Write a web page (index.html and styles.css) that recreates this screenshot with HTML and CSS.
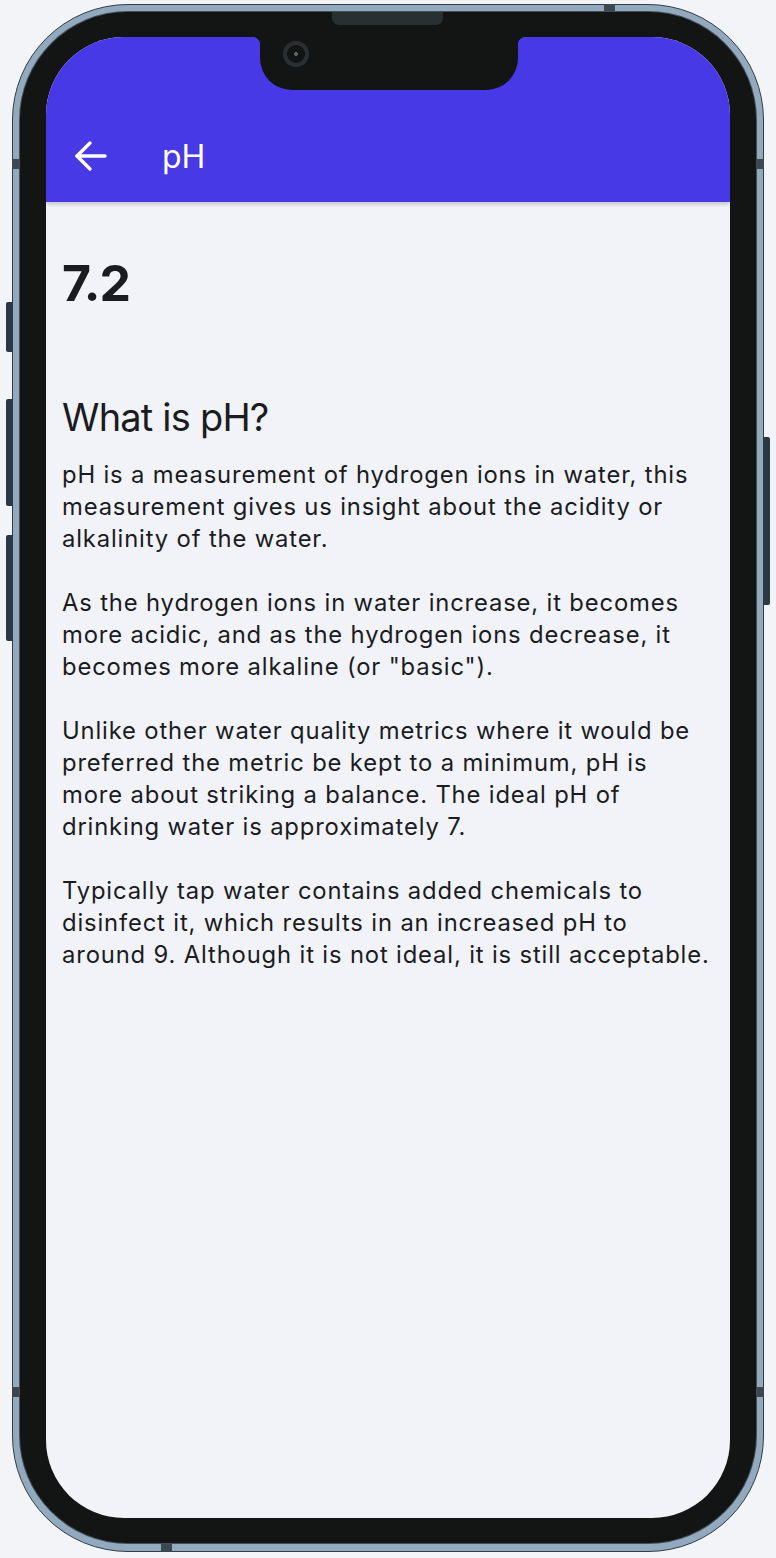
FILE: index.html
```html
<!DOCTYPE html>
<html lang="en">
<head>
<meta charset="utf-8">
<title>pH</title>
<link rel="stylesheet" href="styles.css">
</head>
<body>
<div class="phone">
  <span class="btn btn-l1"></span>
  <span class="btn btn-l2"></span>
  <span class="btn btn-l3"></span>
  <span class="btn btn-r1"></span>
  <span class="mark mark-top"></span>
  <span class="mark mark-bottom"></span>
  <span class="mark mark-l-top"></span>
  <span class="mark mark-r-top"></span>
  <span class="mark mark-l-bot"></span>
  <span class="mark mark-r-bot"></span>
  <div class="bezel">
    <span class="speaker"></span>
    <div class="screen">
      <div class="notch"><span class="camera"></span></div>
      <header class="appbar">
        <div class="toolbar">
          <button class="back" aria-label="Back">
            <svg width="34" height="34" viewBox="0 0 34 34" fill="none" stroke="#ffffff" stroke-width="3.4" stroke-linecap="round" stroke-linejoin="round">
              <path d="M31 16H3"/>
              <path d="M16 3L3 16L16 29"/>
            </svg>
          </button>
          <h1 class="title">pH</h1>
        </div>
      </header>
      <main class="content">
        <div class="value">7.2</div>
        <h2 class="heading">What is pH?</h2>
        <p class="para">pH is a measurement of hydrogen ions in water, this measurement gives us insight about the acidity or alkalinity of the water.</p>
        <p class="para">As the hydrogen ions in water increase, it becomes more acidic, and as the hydrogen ions decrease, it becomes more alkaline (or "basic").</p>
        <p class="para">Unlike other water quality metrics where it would be preferred the metric be kept to a minimum, pH is more about striking a balance. The ideal pH of drinking water is approximately 7.</p>
        <p class="para">Typically tap water contains added chemicals to disinfect it, which results in an increased pH to around 9. Although it is not ideal, it is still acceptable.</p>
      </main>
    </div>
  </div>
</div>
</body>
</html>
```
FILE: styles.css
```css
* { box-sizing: border-box; }
html, body { margin: 0; padding: 0; }
body {
  background: #f2f4f8;
  width: 776px;
  height: 1558px;
  overflow: hidden;
  font-family: "Inter", "Liberation Sans", sans-serif;
  padding: 4px 12px 0 12px;
}
.phone {
  position: relative;
  width: 752px;
  height: 1548px;
  border-radius: 116px;
  background: #93a9bd;
  border: 1px solid #2e3d48;
  padding: 7px 7px 8px 7px;
}
.btn {
  position: absolute;
  background: #293a45;
  border-radius: 2px 0 0 2px;
  width: 7px;
}
.btn-l1 { left: -7px; top: 297px; height: 50px; }
.btn-l2 { left: -7px; top: 394px; height: 107px; }
.btn-l3 { left: -7px; top: 530px; height: 106px; }
.btn-r1 { right: -7px; top: 432px; height: 168px; border-radius: 0 2px 2px 0; }
.mark { position: absolute; background: #3b4852; }
.mark-top { top: -1px; left: 591px; width: 11px; height: 9px; }
.mark-bottom { bottom: -1px; left: 148px; width: 11px; height: 9px; }
.mark-l-top { left: -1px; top: 154px; width: 9px; height: 10px; }
.mark-r-top { right: -1px; top: 154px; width: 9px; height: 10px; }
.mark-l-bot { left: -1px; top: 1382px; width: 9px; height: 10px; }
.mark-r-bot { right: -1px; top: 1382px; width: 9px; height: 10px; }
.bezel {
  position: relative;
  width: 100%;
  height: 100%;
  background: #131514;
  border-radius: 108px;
  padding: 25px 26px 25px 26px;
  box-shadow: 0 0 0 1px #41505a;
}
.speaker {
  position: absolute;
  top: 0;
  left: 312px;
  width: 111px;
  height: 13px;
  background: #293032;
  border-radius: 0 0 7px 7px;
}
.screen {
  position: relative;
  width: 100%;
  height: 100%;
  background: #f2f3f8;
  border-radius: 78px;
  overflow: hidden;
  display: flex;
  flex-direction: column;
}
.notch {
  position: absolute;
  top: 0;
  left: 214px;
  width: 258px;
  height: 53px;
  background: #131514;
  border-radius: 0 0 32px 32px;
  z-index: 3;
}
.notch::before, .notch::after {
  content: "";
  position: absolute;
  top: 0;
  width: 8px;
  height: 8px;
}
.notch::before { left: -8px; background: radial-gradient(circle at 0 100%, transparent 8px, #131514 8.5px); }
.notch::after { right: -8px; background: radial-gradient(circle at 100% 100%, transparent 8px, #131514 8.5px); }
.camera {
  position: absolute;
  left: 23px;
  top: 4px;
  width: 26px;
  height: 26px;
  border-radius: 50%;
  background: radial-gradient(circle at 50% 50%, #5f6669 0 1.6px, #121414 2.2px 8.6px, #2a2f31 9.2px);
}
.appbar {
  flex: none;
  height: 165px;
  background: #4739e5;
  padding-top: 75px;
  box-shadow: 0 2px 4px rgba(0, 0, 0, 0.22);
  position: relative;
  z-index: 2;
}
.toolbar {
  height: 90px;
  display: flex;
  align-items: center;
  padding-left: 28px;
}
.back {
  width: 34px;
  height: 34px;
  padding: 0;
  border: 0;
  background: none;
  display: flex;
}
.title {
  margin: 0 0 0 54px;
  color: #ffffff;
  font-size: 32px;
  font-weight: 400;
  line-height: 1;
}
.content {
  flex: 1;
  padding: 50px 18px 0 16px;
  color: #1b1c1f;
}
.value {
  font-size: 50px;
  font-weight: 700;
  line-height: 62px;
  letter-spacing: -1px;
}
.heading {
  margin: 79px 0 0 0;
  font-size: 38px;
  font-weight: 400;
  line-height: 48px;
  letter-spacing: -0.8px;
}
.para {
  margin: 0 0 32px 0;
  font-size: 23.8px;
  line-height: 32px;
  letter-spacing: 0.85px;
}
.heading + .para { margin-top: 18px; }
```
